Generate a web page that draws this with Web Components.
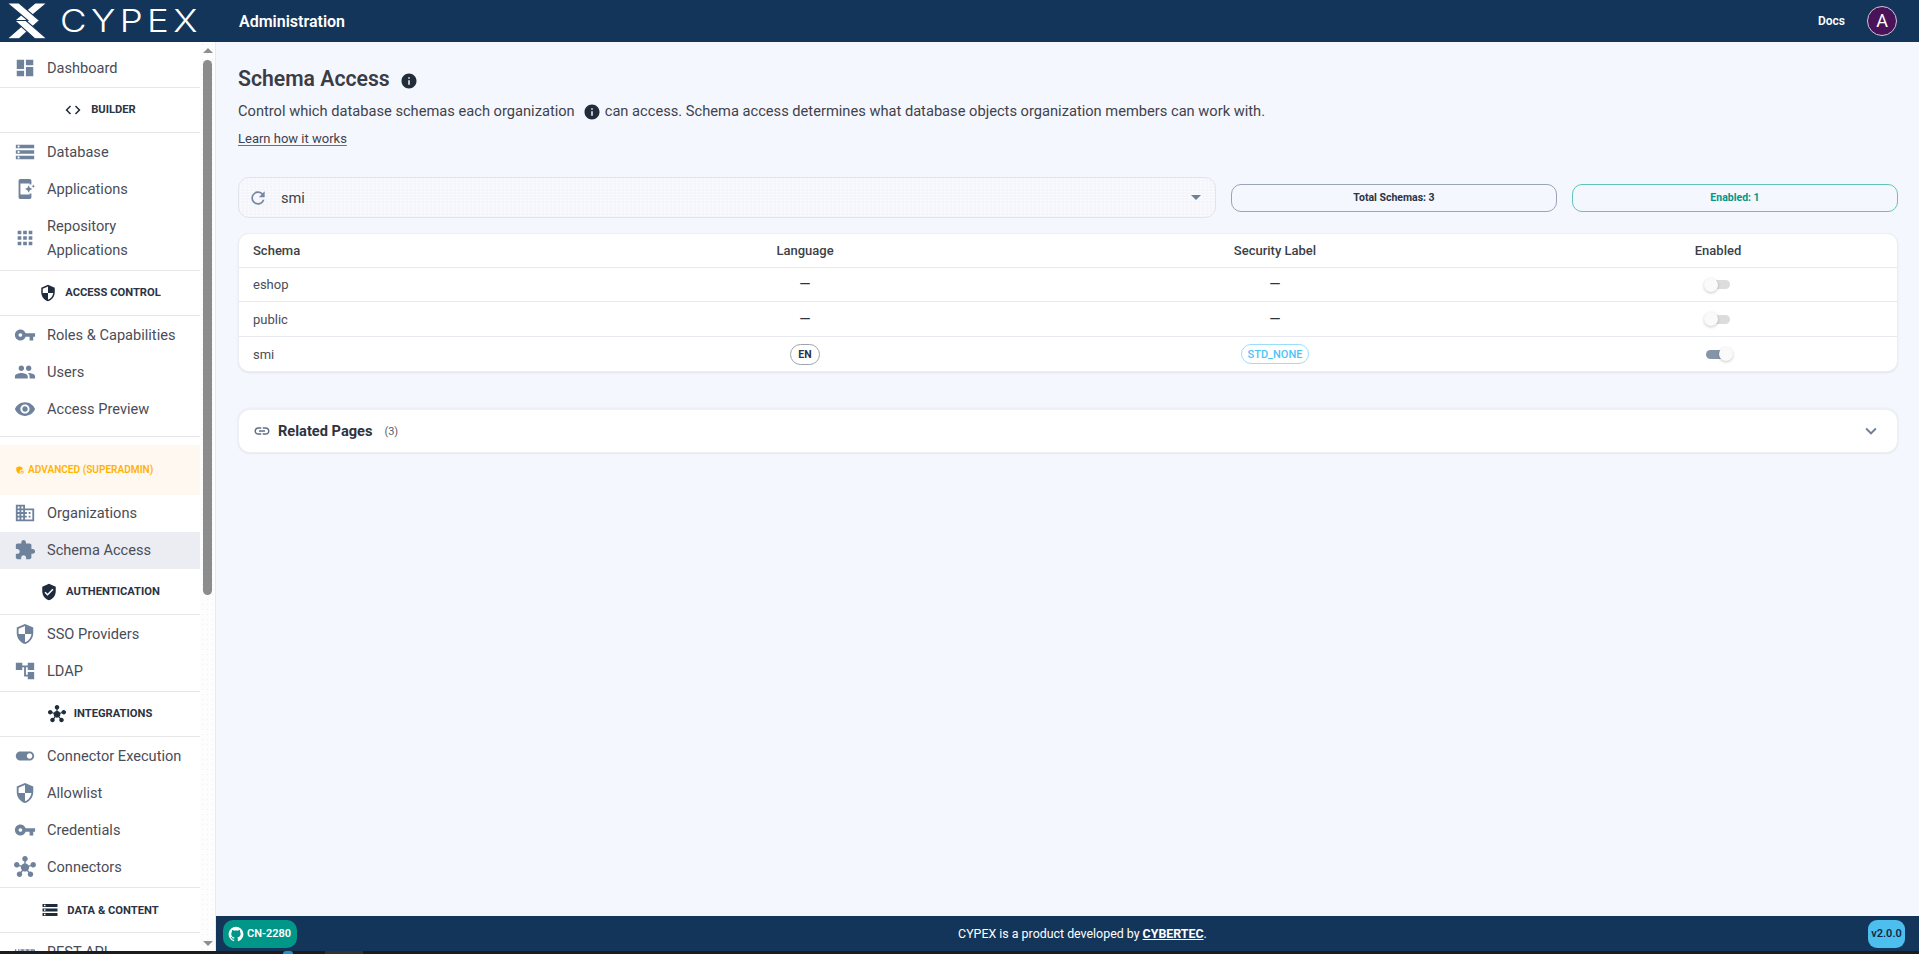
<!DOCTYPE html>
<html lang="en"><head><meta charset="utf-8"><title>Schema Access</title>
<style>
html,body{margin:0;padding:0;height:100%;overflow:hidden;background:#1c1c1c}
body{font-family:Roboto,"Liberation Sans",sans-serif}
</style></head><body>
<cy-app></cy-app>
<script>
const P={
dashboard:'M3 13h8V3H3v10zm0 8h8v-6H3v6zm10 0h8V11h-8v10zm0-18v6h8V3h-8z',
code:'M9.4 16.6 4.8 12l4.6-4.6L8 6l-6 6 6 6 1.4-1.4zm5.2 0 4.6-4.6-4.6-4.6L16 6l6 6-6 6-1.4-1.4z',
storage:'M2 20h20v-4H2v4zm2-3h2v2H4v-2zM2 4v4h20V4H2zm4 3H4V5h2v2zm-4 7h20v-4H2v4zm2-3h2v2H4v-2z',
mobile:'M17 18H7V6h10v1h2V3c0-1.1-.9-2-2-2L7 1.01C5.9 1.01 5 1.9 5 3v18c0 1.1.9 2 2 2h10c1.1 0 2-.9 2-2v-4h-2v1zM20.38 9.62 21 11l.62-1.38L23 9l-1.38-.62L21 7l-.62 1.38L19 9zM16 8l-1.25 2.75L12 12l2.75 1.25L16 16l1.25-2.75L20 12l-2.75-1.25z',
apps:'M4 8h4V4H4v4zm6 12h4v-4h-4v4zm-6 0h4v-4H4v4zm0-6h4v-4H4v4zm6 0h4v-4h-4v4zm6-10v4h4V4h-4zm-6 4h4V4h-4v4zm6 6h4v-4h-4v4zm0 6h4v-4h-4v4z',
security:'M12 1 3 5v6c0 5.55 3.84 10.74 9 12 5.16-1.26 9-6.45 9-12V5l-9-4zm0 10.99h7c-.53 4.12-3.28 7.79-7 8.94V12H5V6.3l7-3.11v8.8z',
key:'M12.65 10C11.83 7.67 9.61 6 7 6c-3.31 0-6 2.69-6 6s2.69 6 6 6c2.61 0 4.83-1.67 5.65-4H17v4h4v-4h2v-4H12.65zM7 14c-1.1 0-2-.9-2-2s.9-2 2-2 2 .9 2 2-.9 2-2 2z',
people:'M16 11c1.66 0 2.99-1.34 2.99-3S17.66 5 16 5c-1.66 0-3 1.34-3 3s1.34 3 3 3zm-8 0c1.66 0 2.99-1.34 2.99-3S9.66 5 8 5C6.34 5 5 6.34 5 8s1.34 3 3 3zm0 2c-2.33 0-7 1.17-7 3.5V19h14v-2.5c0-2.33-4.67-3.5-7-3.5zm8 0c-.29 0-.62.02-.97.05 1.16.84 1.97 1.97 1.97 3.45V19h6v-2.5c0-2.33-4.67-3.5-7-3.5z',
eye:'M12 4.5C7 4.5 2.73 7.61 1 12c1.73 4.39 6 7.5 11 7.5s9.27-3.11 11-7.5c-1.73-4.39-6-7.5-11-7.5zM12 17c-2.76 0-5-2.24-5-5s2.24-5 5-5 5 2.24 5 5-2.24 5-5 5zm0-8c-1.66 0-3 1.34-3 3s1.34 3 3 3 3-1.34 3-3-1.34-3-3-3z',
domain:'M12 7V3H2v18h20V7H12zM6 19H4v-2h2v2zm0-4H4v-2h2v2zm0-4H4V9h2v2zm0-4H4V5h2v2zm4 12H8v-2h2v2zm0-4H8v-2h2v2zm0-4H8V9h2v2zm0-4H8V5h2v2zm10 12h-8v-2h2v-2h-2v-2h2v-2h-2V9h8v10zm-2-8h-2v2h2v-2zm0 4h-2v2h2v-2z',
extension:'M20.5 11H19V7c0-1.1-.9-2-2-2h-4V3.5C13 2.12 11.88 1 10.5 1S8 2.12 8 3.5V5H4c-1.1 0-1.99.9-1.99 2v3.8H3.5c1.49 0 2.7 1.21 2.7 2.7s-1.21 2.7-2.7 2.7H2V20c0 1.1.9 2 2 2h3.8v-1.5c0-1.49 1.21-2.7 2.7-2.7 1.49 0 2.7 1.21 2.7 2.7V22H17c1.1 0 2-.9 2-2v-4h1.5c1.38 0 2.5-1.12 2.5-2.5S21.88 11 20.5 11z',
verified:'M12 1 3 5v6c0 5.55 3.84 10.74 9 12 5.16-1.26 9-6.45 9-12V5l-9-4zm-2 16-4-4 1.41-1.41L10 14.17l6.59-6.59L18 9l-8 8z',
tree:'M22 11V3h-7v3H9V3H2v8h7V8h2v10h4v3h7v-8h-7v3h-2V8h2v3z',
hub:'M8.4 18.2c.38.5.6 1.12.6 1.8 0 1.66-1.34 3-3 3s-3-1.34-3-3 1.34-3 3-3c.44 0 .85.09 1.23.26l1.41-1.77c-.92-1.03-1.29-2.39-1.09-3.69l-2.03-.68c-.54.83-1.46 1.38-2.52 1.38-1.66 0-3-1.34-3-3s1.34-3 3-3 3 1.34 3 3c0 .07 0 .14-.01.21l2.03.68c.64-1.21 1.82-2.09 3.22-2.32V5.91C9.96 5.57 9 4.4 9 3c0-1.66 1.34-3 3-3s3 1.34 3 3c0 1.4-.96 2.57-2.25 2.91v2.16c1.4.23 2.58 1.11 3.22 2.32l2.03-.68c-.01-.07-.01-.14-.01-.21 0-1.66 1.34-3 3-3s3 1.34 3 3-1.34 3-3 3c-1.06 0-1.98-.55-2.52-1.37l-2.03.68c.2 1.29-.16 2.65-1.09 3.69l1.41 1.77c.38-.17.79-.26 1.23-.26 1.66 0 3 1.34 3 3s-1.34 3-3 3-3-1.34-3-3c0-.68.22-1.3.6-1.8l-1.41-1.77c-1.35.75-3.01.76-4.37 0L8.4 18.2z',
toggle:'M17 7H7c-2.76 0-5 2.24-5 5s2.24 5 5 5h10c2.76 0 5-2.24 5-5s-2.24-5-5-5zm0 8c-1.66 0-3-1.34-3-3s1.34-3 3-3 3 1.34 3 3-1.34 3-3 3z',
info:'M12 2C6.48 2 2 6.48 2 12s4.48 10 10 10 10-4.48 10-10S17.52 2 12 2zm1 15h-2v-6h2v6zm0-8h-2V7h2v2z',
refresh:'M17.65 6.35C16.2 4.9 14.21 4 12 4c-4.42 0-7.99 3.58-7.99 8s3.57 8 7.99 8c3.73 0 6.84-2.55 7.73-6h-2.08c-.82 2.33-3.04 4-5.65 4-3.31 0-6-2.69-6-6s2.69-6 6-6c1.66 0 3.14.69 4.22 1.78L13 11h7V4l-2.35 2.35z',
link:'M3.9 12c0-1.71 1.39-3.1 3.1-3.1h4V7H7c-2.76 0-5 2.24-5 5s2.24 5 5 5h4v-1.9H7c-1.71 0-3.1-1.39-3.1-3.1zM8 13h8v-2H8v2zm9-6h-4v1.9h4c1.71 0 3.1 1.39 3.1 3.1s-1.39 3.1-3.1 3.1h-4V17h4c2.76 0 5-2.24 5-5s-2.24-5-5-5z',
expand:'M16.59 8.59 12 13.17 7.41 8.59 6 10l6 6 6-6z',
http:'M4.5 11h-2V9H1v6h1.5v-2.5h2V15H6V9H4.5v2zm2.5-.5h1.5V15H10v-4.5h1.5V9H7v1.5zm5.5 0H14V15h1.5v-4.5H17V9h-4.5v1.5zm9-1.5H18v6h1.5v-2h2c.8 0 1.5-.7 1.5-1.5v-1c0-.8-.7-1.5-1.5-1.5zm0 2.5h-2v-1h2v1z',
github:'M12 1.27a11 11 0 00-3.48 21.46c.55.09.73-.28.73-.55v-1.84c-3.03.64-3.67-1.46-3.67-1.46-.55-1.29-1.28-1.65-1.28-1.65-.92-.65.1-.65.1-.65 1.1 0 1.73 1.1 1.73 1.1.92 1.65 2.57 1.2 3.21.92a2 2 0 01.64-1.47c-2.47-.27-5.04-1.19-5.04-5.5 0-1.1.46-2.1 1.2-2.84a3.76 3.76 0 010-2.93s.91-.28 3.11 1.1c1.8-.49 3.7-.49 5.5 0 2.1-1.38 3.02-1.1 3.02-1.1a3.76 3.76 0 010 2.93c.83.74 1.2 1.74 1.2 2.94 0 4.21-2.57 5.13-5.04 5.4.45.37.82.92.82 2.02v3.03c0 .27.1.64.73.55A11 11 0 0012 1.27',
admin:'M17 11c.34 0 .67.04 1 .09V6.27L10.5 3 3 6.27v4.91c0 4.54 3.2 8.79 7.5 9.82.55-.13 1.08-.32 1.6-.55-.69-.98-1.1-2.17-1.1-3.45 0-3.31 2.69-6 6-6zM17 13c-2.21 0-4 1.79-4 4s1.79 4 4 4 4-1.79 4-4-1.79-4-4-4zm0 1.38c.62 0 1.12.51 1.12 1.12s-.51 1.12-1.12 1.12-1.12-.51-1.12-1.12.5-1.12 1.12-1.12zm0 5.37c-.93 0-1.74-.46-2.24-1.17.05-.72 1.51-1.08 2.24-1.08s2.19.36 2.24 1.08c-.5.71-1.31 1.17-2.24 1.17z'
};
const def=(n,html)=>{customElements.define(n,class extends HTMLElement{
  constructor(){super();this.attachShadow({mode:'open'})}
  connectedCallback(){this.shadowRoot.innerHTML=typeof html==='function'?html(this):html;}
});};
const attr=(e,a,d='')=>e.getAttribute(a)??d;

def('cy-icon',e=>`<style>:host{display:inline-flex;flex:none;width:${attr(e,'size','22')}px;height:${attr(e,'size','22')}px;color:${attr(e,'color','#6f829c')}}svg{width:100%;height:100%;display:block;fill:currentColor}</style><svg viewBox="0 0 24 24"><path d="${P[attr(e,'name')]}"/></svg>`);

def('cy-header',`<style>
:host{display:flex;align-items:center;height:42px;background:#14355a;color:#fff}
.logo{width:216px;flex:none;display:flex;align-items:center;height:42px;box-sizing:border-box}
svg{width:48px;height:42px;flex:none;display:block}
.word{display:inline-block;margin-left:12px;font:350 31px/42px Inter,Roboto,sans-serif;letter-spacing:3.7px;transform:scaleX(1.18);transform-origin:left center;white-space:nowrap}
.title{margin-left:23px;font:600 16px Roboto,sans-serif}
.sp{flex:1}
.docs{font:600 12px Roboto,sans-serif;margin-right:22px}
.av{width:28px;height:28px;border:1px solid #cfc6d6;border-radius:50%;background:#4a1259;font:400 18px/28px Roboto,sans-serif;text-align:center;margin-right:22px}
</style>
<div class="logo"><svg viewBox="0 0 48 42"><g fill="#fff" stroke="#14355a" stroke-width="1.1">
<polygon points="47,3 35,3 14.5,20.5 35,38.8 47,38.8 26,20.5"/>
<polygon points="7,3 19,3 39.5,20.5 19,38.8 7,38.8 28,20.5"/>
<polygon points="14.5,20.5 26,20.5 47,38.8 35,38.8"/>
</g></svg><span class="word">CYPEX</span></div>
<span class="title">Administration</span><span class="sp"></span><span class="docs">Docs</span><span class="av">A</span>`);

def('cy-nav-item',e=>`<style>
:host{display:flex;flex:none;align-items:center;min-height:37px;box-sizing:border-box;padding:6.5px 0 6.5px 14px;gap:11px;font:400 14.6px/24px Roboto,sans-serif;color:#4a4d58;background:${e.hasAttribute('active')?'#ecedf3':'transparent'}}
</style><cy-icon name="${attr(e,'icon')}"></cy-icon><span><slot></slot></span>`);

def('cy-nav-head',e=>`<style>
:host{display:flex;align-items:center;justify-content:center;height:44px;gap:${attr(e,'gap','8')}px;font:700 11.2px Roboto,sans-serif;color:#2a3444;text-transform:uppercase;flex:none;margin:${attr(e,'m','0')}}
</style><cy-icon name="${attr(e,'icon')}" size="18" color="#1f2c3d"></cy-icon><span><slot></slot></span>`);

def('cy-hr',e=>`<style>:host{display:block;height:1px;background:#e6e6e9;flex:none;margin:${attr(e,'m','0')}}</style>`);

def('cy-band',`<style>
:host{display:flex;align-items:center;height:50px;gap:3px;padding-left:15px;background:#fff8f1;color:#ffb300;font:600 10.1px Roboto,sans-serif;text-transform:uppercase;flex:none}
</style><cy-icon name="admin" size="10" color="#ffb300"></cy-icon><span><slot></slot></span>`);

def('cy-scrollbar',`<style>
:host{display:flex;flex-direction:column;align-items:center;width:15px;flex:none;box-sizing:border-box;padding:6px 0 5px;background-color:#fdfdfe;background-image:radial-gradient(#eef0f6 .7px,transparent .9px);background-size:5px 5px}
i{display:block;width:0;height:0;border-left:5px solid transparent;border-right:5px solid transparent}
.u{border-bottom:5px solid #8f8f8f}
.d{border-top:5px solid #8f8f8f;margin-top:auto}
.t{width:9px;height:535px;background:#8c8c8c;border-radius:5px;margin-top:7px}
</style><i class="u"></i><div class="t"></div><i class="d"></i>`);

def('cy-sidebar',`<style>
:host{display:flex;width:216px;flex:none;background:#fff;border-right:1px solid #e8eaf0;box-sizing:border-box;overflow:hidden;min-height:0}
.nav{width:200px;flex:none;overflow:hidden;padding-top:7.5px;box-sizing:border-box;display:flex;flex-direction:column}
</style>
<div class="nav">
<cy-nav-item icon="dashboard">Dashboard</cy-nav-item>
<cy-hr></cy-hr><cy-nav-head icon="code" gap="9">Builder</cy-nav-head><cy-hr m="0 0 1px"></cy-hr>
<cy-nav-item icon="storage">Database</cy-nav-item>
<cy-nav-item icon="mobile">Applications</cy-nav-item>
<cy-nav-item icon="apps">Repository<br>Applications</cy-nav-item>
<cy-hr m="1px 0 0"></cy-hr><cy-nav-head icon="security">Access Control</cy-nav-head><cy-hr m="0 0 1px"></cy-hr>
<cy-nav-item icon="key">Roles &amp; Capabilities</cy-nav-item>
<cy-nav-item icon="people">Users</cy-nav-item>
<cy-nav-item icon="eye">Access Preview</cy-nav-item>
<cy-hr m="8px 0 8px"></cy-hr>
<cy-band>Advanced (Superadmin)</cy-band>
<cy-nav-item icon="domain">Organizations</cy-nav-item>
<cy-nav-item icon="extension" active>Schema Access</cy-nav-item>
<cy-nav-head icon="verified" m="1px 0 0">Authentication</cy-nav-head><cy-hr m="0 0 1px"></cy-hr>
<cy-nav-item icon="security">SSO Providers</cy-nav-item>
<cy-nav-item icon="tree">LDAP</cy-nav-item>
<cy-hr m="1px 0 0"></cy-hr><cy-nav-head icon="hub">Integrations</cy-nav-head><cy-hr m="0 0 .5px"></cy-hr>
<cy-nav-item icon="toggle">Connector Execution</cy-nav-item>
<cy-nav-item icon="security">Allowlist</cy-nav-item>
<cy-nav-item icon="key">Credentials</cy-nav-item>
<cy-nav-item icon="hub">Connectors</cy-nav-item>
<cy-hr m="2px 0 0"></cy-hr><cy-nav-head icon="storage">Data &amp; Content</cy-nav-head><cy-hr></cy-hr>
<cy-nav-item icon="http">REST API</cy-nav-item>
</div><cy-scrollbar></cy-scrollbar>`);

def('cy-pill',e=>{const c=e.hasAttribute('teal');return `<style>
:host{display:flex;align-items:center;justify-content:center;height:28px;box-sizing:border-box;border:1px solid ${c?'#62c5ba':'#9ba3b6'};border-radius:10px;font:700 10.5px Roboto,sans-serif;color:${c?'#009688':'#2a3444'}}
</style><slot></slot>`});

def('cy-select',`<style>
:host{display:flex;align-items:center;height:41px;box-sizing:border-box;border:1px solid #e3e4e8;border-radius:11px;padding:0 14px 0 9px;background-color:#f4f6fb;background-image:radial-gradient(#fdfdfe .7px,transparent .9px);background-size:4px 3px;font:400 14.6px Roboto,sans-serif;color:#3c3f48}
span{margin-left:13px;flex:1}
i{display:block;width:0;height:0;border-left:5px solid transparent;border-right:5px solid transparent;border-top:5px solid #6f7f95}
</style><cy-icon name="refresh" size="20" color="#75879f"></cy-icon><span><slot></slot></span><i></i>`);

def('cy-toggle',e=>{const on=e.hasAttribute('on');return `<style>
:host{display:flex;align-items:center;width:24px;height:9px;border-radius:5px;background:${on?'#8595a8':'#dcdcdc'}}
b{display:block;width:14px;height:14px;flex:none;border-radius:50%;background:#fafafa;box-shadow:0 1px 3px rgba(0,0,0,.22);margin-left:${on?'13px':'-2px'}}
</style><b></b>`});

def('cy-chip',e=>{const c=e.hasAttribute('blue');return `<style>
:host{display:inline-flex;align-items:center;height:${c?20:21}px;box-sizing:border-box;padding:0 ${c?6:7}px;border:1px solid ${c?'#9adff8':'#9ea3ab'};border-radius:11px;font:${c?500:700} ${c?11:10.5}px Roboto,sans-serif;color:${c?'#4fc3f7':'#2a3444'};background:#fff}
</style><slot></slot>`});

def('cy-row',e=>`<style>
:host{display:grid;grid-template-columns:360px 412px 528px 1fr;align-items:center;height:${attr(e,'h','34')}px;box-sizing:border-box;font:${e.hasAttribute('head')?500:400} 13px Roboto,sans-serif;color:${e.hasAttribute('head')?'#3c3f48':'#4a4d58'};border-bottom:${e.hasAttribute('last')?0:1}px solid #e8e9ee}
::slotted(*){justify-self:center;}
::slotted(:first-child){justify-self:start;padding-left:14px}
</style><slot></slot>`);

def('cy-dash',`<style>:host{display:block;font:400 14.5px Roboto,sans-serif;color:#2a3444}</style>—`);

def('cy-table',`<style>:host{display:block;background:#fff;border:1px solid #eceef3;border-radius:11px;box-shadow:0 1px 2px rgba(0,0,0,.08);overflow:hidden;margin-top:15px}</style>
<cy-row head h="34"><span>Schema</span><span>Language</span><span>Security Label</span><span>Enabled</span></cy-row>
<cy-row h="34"><span>eshop</span><cy-dash></cy-dash><cy-dash></cy-dash><cy-toggle></cy-toggle></cy-row>
<cy-row h="35"><span>public</span><cy-dash></cy-dash><cy-dash></cy-dash><cy-toggle></cy-toggle></cy-row>
<cy-row last h="34"><span>smi</span><cy-chip>EN</cy-chip><cy-chip blue>STD_NONE</cy-chip><cy-toggle on></cy-toggle></cy-row>`);

def('cy-accordion',`<style>
:host{display:flex;align-items:center;height:44px;box-sizing:border-box;margin-top:37px;padding:0 15px 0 14px;background:#fff;border:1px solid #eef0f4;border-radius:12px;box-shadow:0 -1px 3px rgba(0,0,0,.05),0 1px 2px rgba(0,0,0,.06)}
b{font:700 14.6px Roboto,sans-serif;color:#2f3340;margin-left:7px}
small{font:400 11px Roboto,sans-serif;color:#5a5e68;margin-left:12px;flex:1}
</style><cy-icon name="link" size="18" color="#5f6f86"></cy-icon><b>Related Pages</b><small>(3)</small><cy-icon name="expand" size="22" color="#6f7f95"></cy-icon>`);

def('cy-page',`<style>
:host{display:block;flex:1;min-width:0;box-sizing:border-box;padding:20px 21px 0 22px;background:#f5f7fe;overflow:hidden}
h1{display:flex;align-items:center;gap:10px;margin:1px 0 0;height:32px;font:600 21.2px/32px Roboto,sans-serif;color:#3a3d46}
h1 cy-icon{margin-top:4px}
p{display:flex;align-items:center;margin:4px 0 0;height:24px;font:400 14.67px/24px Roboto,sans-serif;color:#3f424c;white-space:pre}
p cy-icon{margin:2px 4px 0 8px}
a{display:block;margin-top:6px;height:20px;font:400 13px/20px Roboto,sans-serif;color:#3f424c;text-decoration:underline;text-decoration-color:#5f7390;text-underline-offset:2px}
.ctl{display:grid;grid-template-columns:3fr 1fr 1fr;gap:15px;align-items:center;margin-top:28px}
</style>
<h1>Schema Access <cy-icon name="info" size="18" color="#232c3a"></cy-icon></h1>
<p>Control which database schemas each organization<cy-icon name="info" size="18" color="#232c3a"></cy-icon>can access. Schema access determines what database objects organization members can work with.</p>
<a href="#">Learn how it works</a>
<div class="ctl"><cy-select>smi</cy-select><cy-pill>Total Schemas: 3</cy-pill><cy-pill teal>Enabled: 1</cy-pill></div>
<cy-table></cy-table>
<cy-accordion></cy-accordion>`);

def('cy-footer',`<style>
:host{display:flex;align-items:center;justify-content:space-between;height:35px;flex:none;background:#14355a;color:#fff;padding:0 14px 0 7px;box-sizing:border-box;font:400 12.4px Roboto,sans-serif}
.cn{display:inline-flex;align-items:center;gap:3px;height:28px;width:74px;box-sizing:border-box;padding-left:5px;background:#009688;border-radius:10px;font:600 11px Roboto,sans-serif}
.v{display:flex;align-items:center;justify-content:center;height:28px;width:37px;background:#4dbfef;border-radius:9px;color:#14283f;font:600 11px Roboto,sans-serif}
b{font-weight:700;text-decoration:underline}
</style><span class="cn"><cy-icon name="github" size="16" color="#fff"></cy-icon>CN-2280</span><span>CYPEX is a product developed by <b>CYBERTEC</b>.</span><span class="v">v2.0.0</span>`);

def('cy-strip',`<style>
:host{display:flex;height:3px;flex:none;background:#1c1c1c}
i{display:block;height:3px;margin-left:283px;width:10px;background:#2b8fc4;border-radius:5px 5px 0 0}
u{display:block;height:3px;margin-left:32px;width:38px;background:#333}
</style><i></i><u></u>`);

def('cy-app',`<style>
:host{display:flex;flex-direction:column;width:1919px;height:954px;overflow:hidden}
.body{display:flex;height:909px;flex:none;min-height:0}
.col{display:flex;flex-direction:column;flex:1;min-width:0}
</style>
<cy-header></cy-header>
<div class="body"><cy-sidebar></cy-sidebar><div class="col"><cy-page></cy-page><cy-footer></cy-footer></div></div>
<cy-strip></cy-strip>`);
</script>
</body></html>
